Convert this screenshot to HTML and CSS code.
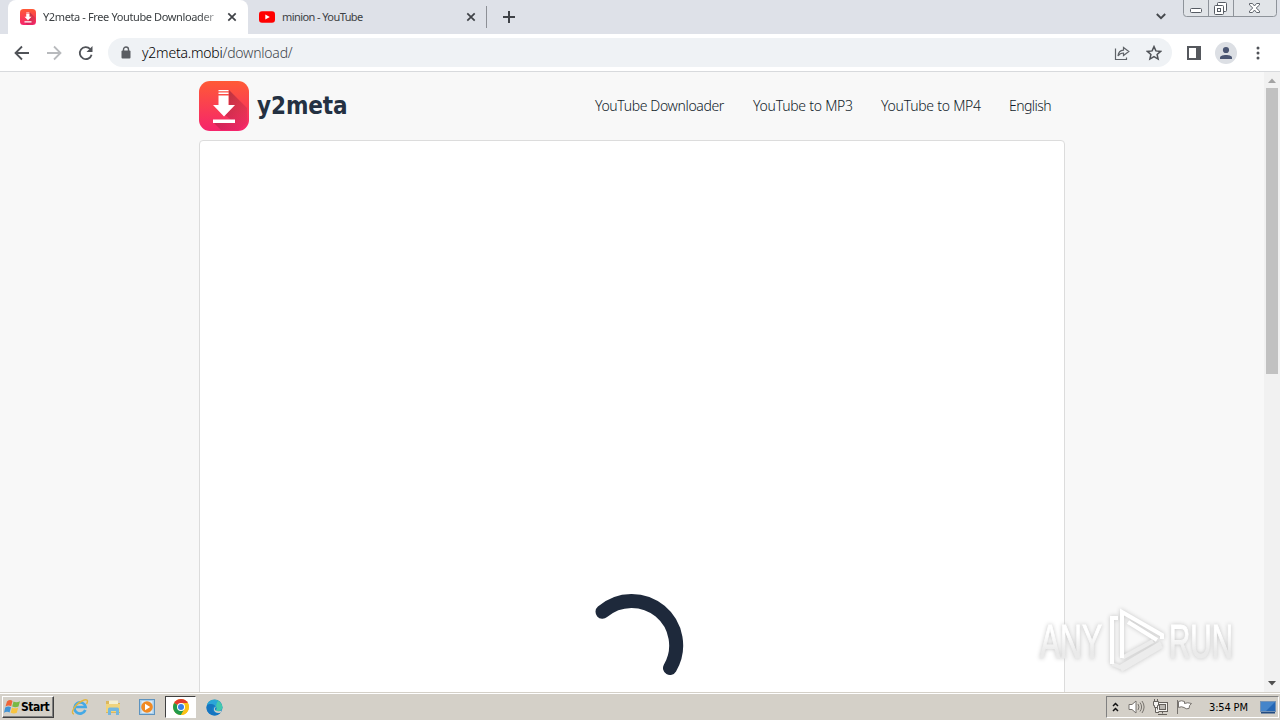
FILE: index.html
```html
<!DOCTYPE html>
<html lang="en">
<head>
<meta charset="utf-8">
<title>Y2meta - Free Youtube Downloader</title>
<link rel="stylesheet" href="styles.css">
</head>
<body>
<svg class="defs" width="0" height="0" aria-hidden="true">
  <defs>
    <linearGradient id="brand" x1="0" y1="0" x2="0" y2="1"><stop offset="0" stop-color="#ff5a36"/><stop offset="1" stop-color="#f5246c"/></linearGradient>
    <linearGradient id="shade" x1="0" y1="0" x2="1" y2="1"><stop offset=".2" stop-color="#8c1d3c" stop-opacity=".6"/><stop offset="1" stop-color="#a8204a" stop-opacity=".05"/></linearGradient>
    <symbol id="logo" viewBox="0 0 50 50">
      <rect width="50" height="50" rx="11" fill="url(#brand)"/>
      <path d="M30 9L48 27V42L40 49H22L15 42H36L26 34L36 24H30Z" fill="url(#shade)"/>
      <path d="M19.500 9h10v1.300h-10zM19.500 11.500h10V13h-10zM19.500 14.500h10V24h6.500L25 35.500 14 24h5.500zM14 38.500h22V42H14z" fill="#fff"/>
    </symbol>
    <symbol id="close" viewBox="0 0 10 10"><path d="M1.300 1.300L8.700 8.700M8.700 1.300L1.300 8.700" stroke="#3f4247" stroke-width="1.700"/></symbol>
  </defs>
</svg>
<div class="screen">
  <header class="tabstrip">
    <div class="tab active">
      <svg class="fav" width="16" height="16"><use href="#logo"/></svg>
      <span class="tab-title first">Y2meta - Free Youtube Downloader</span>
      <svg class="close" width="10" height="10"><use href="#close"/></svg>
    </div>
    <div class="tab">
      <svg class="fav" width="16" height="16" viewBox="0 0 16 16"><rect y="2.300" width="16" height="11.500" rx="3" fill="#f00"/><path d="M6.300 5.500v5L10.800 8z" fill="#fff"/></svg>
      <span class="tab-title second">minion - YouTube</span>
      <svg class="close" width="10" height="10"><use href="#close"/></svg>
    </div>
    <svg class="plus" width="12" height="12" viewBox="0 0 12 12"><path d="M6 0v12M0 6h12" stroke="#3f4247" stroke-width="2"/></svg>
    <svg class="chevron" width="10" height="7" viewBox="0 0 10 7"><path d="M.8 1L5 5.200 9.200 1" fill="none" stroke="#45484d" stroke-width="1.900"/></svg>
    <svg class="controls" width="94" height="18" viewBox="0 0 94 18">
      <path d="M.5-1V13.500Q.5 16.500 3.500 16.500H90.500Q93.500 16.500 93.500 13.500V-1" fill="#e1e4e8" stroke="#8e939a"/>
      <path d="M25.500 0V16M50.500 0V16" stroke="#8e939a"/>
      <rect x="7.500" y="8.500" width="11" height="4" rx="1" fill="#fff" stroke="#565b63"/>
      <g fill="#fff" stroke="#565b63"><rect x="34.500" y="2.500" width="9" height="9" rx="1"/><rect x="31.500" y="5.500" width="9" height="9" rx="1"/><rect x="34.500" y="8.500" width="3" height="3"/></g>
      <path d="M66.500 3.500h3l2 2.500 2-2.500h3v1.500L73.200 8l3.300 3v1.500h-3l-2-2.500-2 2.500h-3V11l3.300-3-3.300-3z" fill="#fff" stroke="#60656d"/>
    </svg>
  </header>

  <div class="toolbar">
    <svg class="nav-icons" width="80" height="16" viewBox="0 0 80 16" fill="none" stroke-width="1.800">
      <path d="M15 8H2M8 1.500L1.500 8 8 14.500" stroke="#505358"/>
      <path d="M33 8h13M40 1.500L46.500 8 40 14.500" stroke="#b8babd"/>
      <path d="M76.200 4A6 6 0 1 0 77.600 9.700" stroke="#505358"/><path d="M78.500 1v6h-6z" fill="#505358"/>
    </svg>
    <div class="omnibox">
      <svg class="lock" width="10" height="13" viewBox="0 0 10 13"><rect x=".5" y="4.500" width="9" height="8" rx="1" fill="#5a5d62"/><path d="M2.500 5V3.500a2.500 2.500 0 0 1 5 0V5" fill="none" stroke="#5a5d62" stroke-width="1.400"/></svg>
      <span class="url">y2meta.mobi<span class="path">/download/</span></span>
      <svg class="share" width="16" height="16" viewBox="0 0 16 16" fill="none" stroke="#5f6368" stroke-width="1.200"><path d="M1.500 3.500V14.500H12.500V12.500"/><path d="M4 11C4.300 7.500 6.500 5.500 9.500 5.200V2.500L14.800 6.500 9.500 10.500V8C7 8 5.300 9 4 11Z"/></svg>
      <svg class="star" width="16" height="16" viewBox="0 0 16 16"><path d="M8 1.600l1.900 4.300 4.700.5-3.500 3.100 1 4.600L8 11.700l-4.100 2.400 1-4.600L1.400 6.400l4.700-.5z" fill="none" stroke="#505358" stroke-width="1.500"/></svg>
    </div>
    <svg class="panel" width="14" height="14" viewBox="0 0 14 14"><rect x="1" y="1" width="12" height="12" fill="#fff" stroke="#55585d" stroke-width="2"/><path d="M9 1h4v12H9z" fill="#55585d"/></svg>
    <svg class="profile" width="22" height="22" viewBox="0 0 22 22"><circle cx="11" cy="11" r="11" fill="#dcdfe4"/><circle cx="11" cy="8" r="3.100" fill="#4a5572"/><path d="M5 17v-1.500C5 12 17 12 17 15.500V17z" fill="#4a5572"/></svg>
    <svg class="dots" width="4" height="14" viewBox="0 0 4 14" fill="#505358"><circle cx="2" cy="2" r="1.500"/><circle cx="2" cy="7" r="1.500"/><circle cx="2" cy="12" r="1.500"/></svg>
  </div>

  <div class="viewport">
    <main class="page">
      <div class="site-header">
        <svg class="logo" width="50" height="50"><use href="#logo"/></svg>
        <span class="brand">y2meta</span>
        <nav class="site-nav">
          <span class="n1">YouTube Downloader</span><span class="n2">YouTube to MP3</span><span class="n3">YouTube to MP4</span><span class="n4">English</span>
        </nav>
      </div>
      <section class="card">
        <svg class="spinner" width="104" height="104" viewBox="0 0 104 104"><path d="M22.500 18.800A44.500 44.500 0 0 1 90 75" fill="none" stroke="#1e293b" stroke-width="14" stroke-linecap="round"/></svg>
      </section>
    </main>
    <div class="scrollbar">
      <svg width="16" height="16" viewBox="0 0 16 16"><path d="M4 11L8 6.500 12 11z" fill="#a3a3a3"/></svg>
      <div class="thumb"></div>
      <svg class="down" width="16" height="16" viewBox="0 0 16 16"><path d="M4 5L8 9.500 12 5z" fill="#505050"/></svg>
    </div>
  </div>

  <footer class="taskbar">
    <div class="start">
      <svg width="17" height="16" viewBox="0 0 17 16"><path d="M3 2.500Q6-.2 8.500 2L7.200 7.200Q4.500 5.500 1.500 7.500z" fill="#ef6538"/><path d="M9.500 2.500Q12.500 4.200 16 2.200L14.500 7.500Q11.500 9 8.200 7.500z" fill="#78b944"/><path d="M1.200 8.500Q4.200 6.500 7 8.200L5.600 13.500Q3 11.800 0 13.800z" fill="#4294d5"/><path d="M8 8.500Q11 10.200 14.200 8.500L12.800 13.800Q10 15.400 6.700 13.800z" fill="#f8c440"/></svg>
      <span class="start-label">Start</span>
    </div>
    <svg class="ie" width="18" height="18" viewBox="0 0 18 18" fill="none"><path d="M14.300 12A5.600 5.600 0 1 1 14.600 9H5" stroke="#45a9e5" stroke-width="2.700"/><path d="M3 16C-1 16 3 7 11 3Q16 .5 16.500 3Q16.500 4.500 15.500 6" stroke="#e2b63f" stroke-width="1.400"/></svg>
    <svg class="folder" width="16" height="17" viewBox="0 0 16 17"><path d="M1 2h5l1 2h8v10H1z" fill="#dcb75c"/><path d="M4 1.500h9v6H4z" fill="#f4efd0"/><path d="M1 5h14v8H1z" fill="#f0d47c"/><path d="M3 16V10q0-1.500 1.500-1.500h8q1.500 0 1.500 1.500v6h-3v-4H6v4z" fill="#73b7df"/></svg>
    <svg class="media" width="16" height="16" viewBox="0 0 16 16"><rect x=".5" y=".5" width="15" height="15" fill="#a9cfeb" stroke="#5d93bf"/><rect x="2.500" y="2" width="11" height="12" fill="#dceaf5"/><circle cx="8" cy="8" r="5.800" fill="#f08a23"/><path d="M6 4.800v6.400L11.200 8z" fill="#fff"/></svg>
    <div class="task-active">
      <svg width="16" height="16" viewBox="0 0 16 16"><circle cx="8" cy="8" r="8" fill="#fbc116"/><path d="M8 8L1.100 4A8 8 0 0 1 14.900 4z" fill="#e33b2e"/><path d="M1.100 4A8 8 0 0 0 8 16L11.500 10z" fill="#229a4b"/><path d="M8 4h6.900A8 8 0 0 1 8 16l3.500-6z" fill="#fbc116"/><circle cx="8" cy="8" r="4" fill="#fff"/><circle cx="8" cy="8" r="3" fill="#397fe7"/></svg>
    </div>
    <svg class="edge" width="17" height="17" viewBox="0 0 17 17"><circle cx="8.500" cy="8.500" r="8" fill="#1683cc"/><path d="M1 6A8 8 0 0 1 16.500 8.500C16.500 12 11 13 9.500 11.500Q11.500 10 10 7.500C7.500 4.200 3 4.500 1 6z" fill="#43c8ae"/><path d="M1 6C2 1.500 8-.5 12 2Q10 4 10 7.500C7.500 4.200 3 4.500 1 6z" fill="#2ba5d8"/><path d="M1 6C4 4.200 8 4.800 9 7Q5.500 7.500 6.500 11C7.500 14.500 11.500 15 14.500 13.800A8 8 0 0 1 1 6z" fill="#1675c0"/><path d="M10 7.500Q8 9.500 9.500 11.500Q12 13 16 11.500L14.500 13.800Q8 14.500 7.800 10Q8 8 10 7.500z" fill="#d4d0c8"/></svg>
    <div class="tray">
      <svg class="expand" width="7" height="11" viewBox="0 0 7 11"><path d="M1 4L3.500 1.500 6 4M1 9L3.500 6.500 6 9" fill="none" stroke="#111" stroke-width="1.500"/></svg>
      <svg class="sound" width="17" height="16" viewBox="0 0 17 16" fill="#fff" stroke="#77736e"><path d="M1 5.500h3L8 2v12L4 10.500H1z"/><path d="M10 5q2 3 0 6M12 3.500q3.200 4.500 0 9M14 2q4.200 6 0 12" fill="none"/></svg>
      <svg class="network" width="17" height="17" viewBox="0 0 17 17" fill="#f4f3f0" stroke="#65615c"><rect x="5.500" y="3.500" width="10" height="9"/><rect x="7.500" y="5.500" width="6" height="5" fill="#bbb8b3"/><path d="M10.500 12.500v2M6 15.500h9M3.500 7v6.500H7"/><path d="M1.500 2.500h5v4h-1v2h-3v-2h-1zM2.500 0v2.500M5.500 0v2.500"/></svg>
      <svg class="flag" width="17" height="16" viewBox="0 0 17 16" fill="#fff" stroke="#77736e"><path d="M1.500 1v14"/><path d="M2.500 2.500q3-1.500 6 0v2q3-1.500 7 0-2.500 1.500-2.500 5-3 1-5-1-2.500-1.500-5.500 0z"/></svg>
      <span class="clock">3:54 PM</span>
      <svg class="desktop" width="16" height="13" viewBox="0 0 16 13"><rect x=".5" y=".5" width="15" height="10" fill="#2567b5" stroke="#7593b5"/><path d="M1 1h14L6 10H1z" fill="#4585ca"/><path d="M1 11h14v1.500H1z" fill="#214a80"/></svg>
    </div>
  </footer>

  <svg class="watermark" width="240" height="76" viewBox="0 0 240 76">
    <defs><linearGradient id="fade" x1="0" y1="0" x2="0" y2="1"><stop offset=".35" stop-color="#fff"/><stop offset=".7" stop-color="#eaeaea"/></linearGradient></defs>
    <g class="wm-art">
      <text class="wm-text" x="5" y="54" textLength="62" lengthAdjust="spacingAndGlyphs">ANY</text>
      <text class="wm-text" x="134" y="54" textLength="64" lengthAdjust="spacingAndGlyphs">RUN</text>
      <g fill="none" stroke="#ececec" stroke-width="4"><path d="M77 60L85 63L126 39"/><path d="M87 54L118 37M86 66L127 42"/></g>
      <g fill="none" stroke="#fff" stroke-width="4"><path d="M83 14H77V60"/><path d="M87 54V8L127 31V35M93 18L122 36"/></g>
    </g>
  </svg>
</div>
</body>
</html>
```
FILE: styles.css
```css
* { box-sizing: border-box; }
body { margin: 0; overflow: hidden; font-family: "DejaVu Sans Condensed", "DejaVu Sans", sans-serif; }
svg { flex: none; }
.defs { position: absolute; }
.screen { position: relative; width: 1280px; height: 720px; display: flex; flex-direction: column; overflow: hidden; }
span { white-space: nowrap; }

.tabstrip { height: 34px; flex: none; display: flex; background: #dee1e8; padding-left: 8px; }
.tab { width: 239px; height: 34px; display: flex; align-items: center; padding: 0 10px 0 12px; border-right: 1px solid transparent; }
.tab.active { width: 240px; padding-right: 11px; background: #fff; border-radius: 8px 8px 0 0; border: 0; }
.tab:not(.active) { padding-left: 11px; border-image: linear-gradient(transparent 7px, #8d9096 7px, #8d9096 27px, transparent 27px) 1; }
.tab-title { margin-left: 7px; font-family: "Noto Sans", sans-serif; font-size: 11px; color: #3c4043; line-height: 18px; letter-spacing: -.58px; }
.first { width: 174px; letter-spacing: -.38px; -webkit-mask-image: linear-gradient(90deg, #000 90%, #0005); mask-image: linear-gradient(90deg, #000 90%, #0005); }
.close { margin-left: auto; }
.plus { margin: 11px 0 0 16px; }
.chevron { margin: 13px 0 0 auto; }
.controls { margin: 0 3px 0 17px; }

.toolbar { height: 38px; flex: none; display: flex; align-items: center; background: #fff; border-bottom: 1px solid #d8dadd; padding-left: 14px; }
.omnibox { width: 1064px; height: 29px; margin-left: 14px; border-radius: 15px; background: #eff2f5; display: flex; align-items: center; padding: 0 10px 0 13px; }
.url { margin-left: 11px; font: 300 14px/20px "Noto Sans", sans-serif; color: #000; letter-spacing: -.22px; }
.path { color: #42464c; }
.share { margin-left: auto; }
.star { margin-left: 16px; }
.panel { margin-left: 15px; }
.profile { margin-left: 14px; }
.dots { margin-left: 19px; }

.viewport { height: 620px; flex: none; display: flex; overflow: hidden; background: #f8f8f8; }
.page { width: 1264px; padding: 0 199px; }
.site-header { height: 68px; display: flex; align-items: center; }
.brand { margin-left: 8px; font: bold 24px/30px "DejaVu Sans Condensed", "DejaVu Sans", sans-serif; letter-spacing: -.1px; color: #243142; }
.site-nav { display: flex; margin-left: auto; gap: 28px; padding-right: 14px; font: 300 14px/20px "Noto Sans", sans-serif; color: #101b2a; }
.n1 { width: 130px; letter-spacing: -.36px; }
.n2, .n3 { width: 100px; letter-spacing: -.25px; }
.n4 { width: 42px; letter-spacing: -.55px; }
.card { height: 620px; border: 1px solid #dcdcdc; border-radius: 4px; background: #fff; padding: 452px 0 0 380px; }
.spinner { display: block; }
.scrollbar { width: 16px; display: flex; flex-direction: column; background: #f1f1f1; }
.thumb { width: 12px; height: 286px; margin-left: 2px; background: #c1c1c1; }
.down { margin-top: auto; }

.taskbar { height: 28px; flex: none; display: flex; align-items: center; background: #d4d0c8; border-top: 1px solid #d4d0c8; box-shadow: inset 0 1px #fff; padding: 1px 1px 0 2px; }
.start { width: 52px; height: 22px; display: flex; align-items: center; padding-left: 1px; border: 1px solid; border-color: #fff #404040 #404040 #fff; box-shadow: inset -1px -1px #808080; }
.start-label { font-size: 12px; font-weight: bold; letter-spacing: -.5px; color: #000; }
.ie { margin-left: 17px; }
.folder { margin-left: 16px; }
.media { margin-left: 18px; }
.task-active { width: 31px; height: 22px; margin-left: 10px; display: flex; align-items: center; justify-content: center; background: #fff; border: 1px solid; border-color: #404040 #fff #fff #404040; }
.edge { margin-left: 10px; }
.tray { width: 173px; height: 22px; margin-left: auto; display: flex; align-items: center; border: 1px solid; border-color: #808080 #fff #fff #808080; padding-left: 5px; }
.sound { margin-left: 9px; }
.network { margin-left: 7px; }
.flag { margin-left: 7px; }
.clock { width: 40px; margin-left: 16px; font-size: 11px; letter-spacing: -.15px; color: #000; }
.desktop { margin-left: 11px; }

.watermark { position: absolute; left: 1035px; top: 604px; }
.wm-art { filter: drop-shadow(0 0 2px #c4c4c4); }
.wm-text { font: 49px "Liberation Sans", sans-serif; fill: url(#fade); stroke: url(#fade); stroke-width: 1; }
```
